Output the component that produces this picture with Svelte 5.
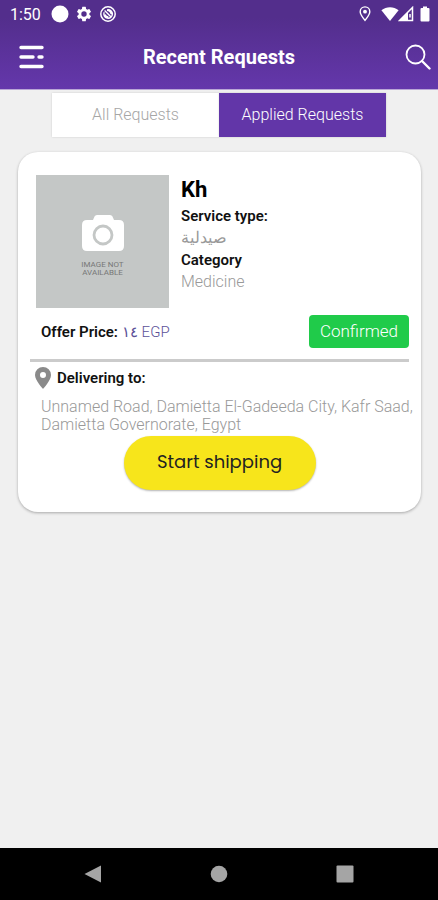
<script lang="ts">
  const tabs = ['All Requests', 'Applied Requests'];
  let activeTab = $state('Applied Requests');

  const request = {
    name: 'Kh',
    service: 'صيدلية',
    category: 'Medicine',
    price: '١٤',
    currency: 'EGP',
    status: 'Confirmed',
    address: 'Unnamed Road, Damietta El-Gadeeda City, Kafr Saad, Damietta Governorate, Egypt'
  };
</script>

<div class="screen">
  <header>
    <div class="status-bar">
      <span class="time">1:50</span>
      <svg width="18" height="18" viewBox="0 0 18 18"><circle cx="9" cy="9" r="8.5" fill="#fff" /></svg>
      <svg width="18" height="18" viewBox="0 0 24 24" fill="#fff">
        <path d="M19.14 12.94c.04-.3.06-.61.06-.94s-.02-.64-.07-.94l2.03-1.58a.5.5 0 0 0 .12-.61l-1.92-3.32a.49.49 0 0 0-.59-.22l-2.39.96a7 7 0 0 0-1.62-.94l-.36-2.54a.48.48 0 0 0-.48-.41h-3.84a.47.47 0 0 0-.47.41l-.36 2.54c-.59.24-1.13.57-1.62.94l-2.39-.96a.48.48 0 0 0-.59.22L2.74 8.87a.47.47 0 0 0 .12.61l2.03 1.58a6 6 0 0 0 0 1.88l-2.03 1.58a.5.5 0 0 0-.12.61l1.92 3.32c.12.22.37.29.59.22l2.39-.96c.5.38 1.03.7 1.62.94l.36 2.54c.05.24.24.41.48.41h3.84c.24 0 .44-.17.47-.41l.36-2.54a7 7 0 0 0 1.62-.94l2.39.96c.22.08.47 0 .59-.22l1.92-3.32a.47.47 0 0 0-.12-.61zM12 15.6a3.6 3.6 0 1 1 0-7.2 3.6 3.6 0 0 1 0 7.2z" />
      </svg>
      <svg width="18" height="18" viewBox="0 0 18 18" fill="none" stroke="#fff">
        <circle cx="9" cy="9" r="7.2" stroke-width="1.5" />
        <path d="M5.2 7.2a4.3 4.3 0 1 0 3.2-2.5M5.6 5.6l6 5.8M8 5.2c2 .2 3.8 1.8 4.2 4M6 9.4c.6 1.6 1.8 2.5 3.4 2.6" stroke-width="1.4" />
      </svg>
      <span class="spacer"></span>
      <svg width="12" height="16" viewBox="0 0 12 16" fill="none" stroke="#fff">
        <path d="M6 14.4C3.8 11.3 1.2 8.6 1.2 5.7a4.8 4.8 0 0 1 9.6 0C10.8 8.6 8.2 11.3 6 14.4z" stroke-width="1.4" />
        <circle cx="6" cy="5.7" r="1.9" fill="#fff" stroke="none" />
      </svg>
      <svg class="wifi" width="18" height="16" viewBox="0 0 18 16"><path d="M9 15 .4 4.3C3 2.2 5.8 1.2 9 1.2s6 1 8.6 3.1z" fill="#fff" /></svg>
      <svg width="16" height="16" viewBox="0 0 16 16">
        <path d="M1.5 14.5 14.5 1.5v13z" fill="none" stroke="#fff" stroke-width="1.5" />
        <path d="M1 15 10 6v9z" fill="#fff" />
        <path d="M12 8v3.5" stroke="#fff" stroke-width="1.5" />
      </svg>
      <svg width="10" height="16" viewBox="0 0 10 16"><path d="M3 .5h4V2h1.5q1 0 1 1v11.5q0 1-1 1h-7q-1 0-1-1V3q0-1 1-1H3z" fill="#fff" /></svg>
    </div>
    <div class="app-bar">
      <button class="icon-btn menu" aria-label="Menu">
        <svg width="26" height="26" viewBox="0 0 26 26" stroke="#fff" stroke-width="3.4" stroke-linecap="round">
          <path d="M3 3.500h21M3 13h12M21 13h3M3 22.500h21" />
        </svg>
      </button>
      <h1>Recent Requests</h1>
      <button class="icon-btn search" aria-label="Search">
        <svg width="26" height="26" viewBox="0 0 26 26" fill="none" stroke="#fff" stroke-width="1.8" stroke-linecap="round">
          <circle cx="10.500" cy="10.500" r="9" />
          <path d="M17 17l7.500 7.500" stroke-width="2.400" />
        </svg>
      </button>
    </div>
  </header>

  <main>
    <div class="tabs">
      {#each tabs as tab}
        <button class="tab" class:active={activeTab === tab} onclick={() => (activeTab = tab)}>{tab}</button>
      {/each}
    </div>

    <article class="card">
      <div class="summary">
        <div class="photo">
          <svg width="42" height="36" viewBox="0 0 42 36">
            <path d="M5 5h6l1.500-3.500Q13.200 0 15 0h13q1.800 0 2.500 1.500L32 5h5q5 0 5 5v21q0 5-5 5H5q-5 0-5-5V10q0-5 5-5z" fill="#fff" />
            <circle cx="21" cy="20" r="9" fill="none" stroke="#c4c7c6" stroke-width="2.800" />
          </svg>
          <span>IMAGE NOT<br />AVAILABLE</span>
        </div>
        <div class="details">
          <h2>{request.name}</h2>
          <strong>Service type:</strong>
          <span lang="ar">{request.service}</span>
          <strong>Category</strong>
          <span>{request.category}</span>
        </div>
      </div>

      <div class="offer">
        <strong>Offer Price:</strong>
        <span class="price"><bdi lang="ar">{request.price}</bdi> {request.currency}</span>
        <span class="status">{request.status}</span>
      </div>

      <hr />

      <div class="delivery">
        <svg width="16" height="22" viewBox="0 0 16 22">
          <path d="M8 0a8 8 0 0 0-8 8c0 5.500 8 14 8 14s8-8.500 8-14a8 8 0 0 0-8-8zm0 5a3 3 0 1 1 0 6 3 3 0 0 1 0-6z" fill="#8a8a8a" />
        </svg>
        <strong>Delivering to:</strong>
      </div>
      <p class="address">{request.address}</p>
      <button class="ship">Start shipping</button>
    </article>
  </main>

  <nav>
    <button aria-label="Back"><svg width="18" height="18" viewBox="0 0 18 18"><path d="M17 .5v17L.5 9z" fill="#a5a5a5" /></svg></button>
    <button aria-label="Home"><svg width="18" height="18" viewBox="0 0 18 18"><circle cx="9" cy="9" r="8.3" fill="#a5a5a5" /></svg></button>
    <button aria-label="Recent apps"><svg width="18" height="18" viewBox="0 0 18 18"><rect x=".5" y=".5" width="17" height="17" rx="1" fill="#a5a5a5" /></svg></button>
  </nav>
</div>

<style>
  :global(body) {
    margin: 0;
  }

  .screen {
    display: flex;
    flex-direction: column;
    min-height: 100vh;
    background: #f0f0f0;
    font-family: Roboto, "DejaVu Sans", sans-serif;
    font-size: 15px;
    color: #111;
  }

  button {
    padding: 0;
    border: none;
    background: none;
    font: inherit;
    cursor: pointer;
  }

  svg {
    display: block;
    flex: none;
  }

  header {
    background: linear-gradient(#532e8c 20%, #6437ab);
    border-bottom: 1px solid #b9a6d6;
    color: #fff;
  }

  .status-bar {
    display: flex;
    align-items: center;
    gap: 6px;
    height: 28px;
    padding: 0 8px 0 10px;
  }

  .time {
    margin-right: 4px;
    font-size: 16px;
  }

  .spacer {
    flex: 1;
  }

  .wifi {
    margin-left: 4px;
    margin-right: -7px;
  }

  .app-bar {
    display: grid;
    grid-template-columns: 1fr auto 1fr;
    align-items: center;
    height: 58px;
    padding: 0 7px 3px;
  }

  h1 {
    margin: 0;
    font-size: 20px;
    line-height: 24px;
    font-weight: 700;
  }

  .icon-btn {
    width: 26px;
    height: 26px;
  }

  .menu {
    margin-left: 11px;
  }

  .search {
    justify-self: end;
  }

  main {
    flex: 1;
  }

  .tabs {
    display: flex;
    margin: 3px 52px 0;
  }

  .tab {
    flex: 1;
    height: 44px;
    padding-bottom: 2px;
    background: #fff;
    color: #a6a6a6;
    font-size: 16px;
    font-weight: 300;
    box-shadow: 0 0 2px rgba(0, 0, 0, 0.15);
  }

  .tab.active {
    background: #6236a8;
    color: #fff;
  }

  .card {
    display: flex;
    flex-direction: column;
    margin: 15px 17px 0 18px;
    padding: 23px 12px 22px;
    border-radius: 20px;
    background: #fff;
    box-shadow: 0 1px 3px rgba(0, 0, 0, 0.3);
  }

  .summary {
    display: flex;
    gap: 12px;
    padding-left: 6px;
  }

  .photo {
    display: flex;
    flex-direction: column;
    align-items: center;
    justify-content: center;
    gap: 10px;
    box-sizing: border-box;
    width: 133px;
    height: 133px;
    padding-top: 8px;
    background: #c4c7c6;
  }

  .photo span {
    font-size: 8px;
    line-height: 8px;
    color: #777;
    text-align: center;
  }

  .details {
    display: flex;
    flex-direction: column;
    line-height: 22px;
  }

  .details span {
    font-size: 16px;
    font-weight: 300;
    color: #999;
  }

  h2 {
    margin: 0;
    font-size: 22px;
    line-height: 30px;
    font-weight: 700;
    color: #000;
  }

  strong {
    font-weight: 600;
  }

  .offer {
    display: flex;
    align-items: center;
    gap: 4px;
    padding: 7px 0 0 11px;
  }

  .price {
    font-weight: 300;
    color: #5c5298;
  }

  .status {
    margin-left: auto;
    padding: 0 11px;
    border-radius: 4px;
    background: #20cb4a;
    color: #fff;
    font-size: 17px;
    line-height: 33px;
    font-weight: 300;
  }

  hr {
    width: 100%;
    height: 3px;
    margin: 11px 0 5px;
    border: none;
    background: #cbcbcb;
  }

  .delivery {
    display: flex;
    align-items: center;
    gap: 6px;
    padding-left: 5px;
  }

  .address {
    margin: 9px -8px 2px 0;
    padding-left: 11px;
    font-size: 16px;
    line-height: 18px;
    font-weight: 300;
    color: #999;
  }

  .ship {
    align-self: center;
    width: 192px;
    height: 54px;
    padding-bottom: 4px;
    border-radius: 27px;
    background: #f7e51b;
    color: #222;
    font-family: Poppins, Inter, sans-serif;
    font-size: 18px;
    box-shadow: 0 1px 2px rgba(0, 0, 0, 0.3);
  }

  nav {
    display: flex;
    align-items: center;
    justify-content: center;
    gap: 108px;
    height: 52px;
    background: #000;
  }
</style>
